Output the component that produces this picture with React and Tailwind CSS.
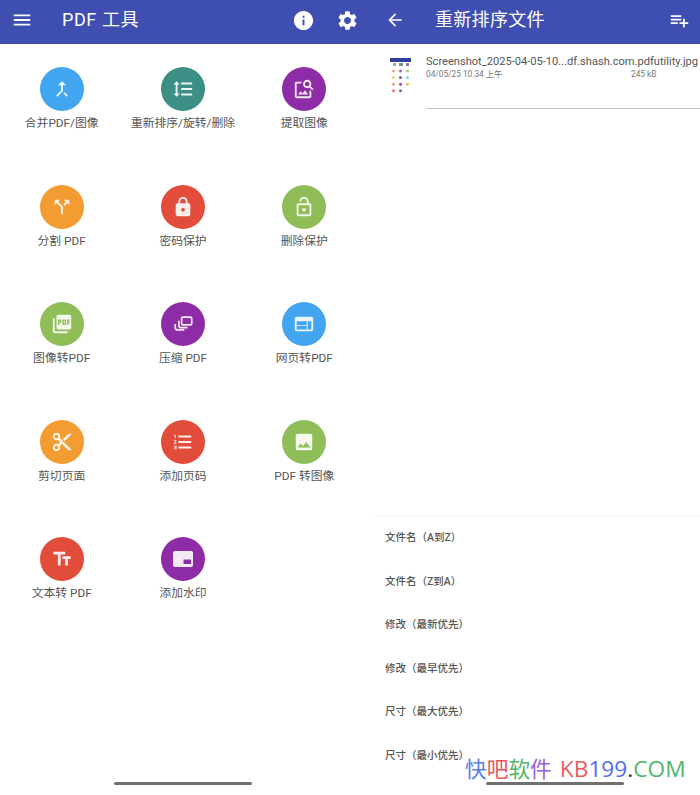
const P = {
  menu: "M3 18h18v-2H3v2zm0-5h18v-2H3v2zm0-7v2h18V6H3z",
  info: "M12 2C6.48 2 2 6.48 2 12s4.48 10 10 10 10-4.48 10-10S17.52 2 12 2zm1 15h-2v-6h2v6zm0-8h-2V7h2v2z",
  gear: "M19.14 12.94c.04-.3.06-.61.06-.94 0-.32-.02-.64-.07-.94l2.03-1.58c.18-.14.23-.41.12-.61l-1.92-3.32c-.12-.22-.37-.29-.59-.22l-2.39.96c-.5-.38-1.03-.7-1.62-.94l-.36-2.54c-.04-.24-.24-.41-.48-.41h-3.84c-.24 0-.43.17-.47.41l-.36 2.54c-.59.24-1.13.57-1.62.94l-2.39-.96c-.22-.08-.47 0-.59.22L2.74 8.87c-.12.21-.08.47.12.61l2.03 1.58c-.05.3-.09.63-.09.94s.02.64.07.94l-2.03 1.58c-.18.14-.23.41-.12.61l1.92 3.32c.12.22.37.29.59.22l2.39-.96c.5.38 1.03.7 1.62.94l.36 2.54c.05.24.24.41.48.41h3.84c.24 0 .44-.17.47-.41l.36-2.54c.59-.24 1.13-.56 1.62-.94l2.39.96c.22.08.47 0 .59-.22l1.92-3.32c.12-.22.07-.47-.12-.61l-2.01-1.58zM12 15.6c-1.98 0-3.6-1.62-3.6-3.6s1.62-3.6 3.6-3.6 3.6 1.62 3.6 3.6-1.62 3.6-3.6 3.6z",
  back: "M20 11H7.83l5.59-5.59L12 4l-8 8 8 8 1.41-1.41L7.83 13H20v-2z",
  add: "M14 10H2v2h12v-2zm0-4H2v2h12V6zm4 8v-4h-2v4h-4v2h4v4h2v-4h4v-2h-4zM2 16h8v-2H2v2z",
  merge: "M17 20.41L18.41 19 15 15.59 13.59 17 17 20.41zM7.5 8H11v5.59L5.59 19 7 20.41l6-6V8h3.5L12 3.5 7.5 8z",
  spacing: "M6 7h2.5L5 3.5 1.5 7H4v10H1.5L5 20.5 8.5 17H6V7zm4-2v2h12V5H10zm0 14h12v-2H10v2zm0-6h12v-2H10v2z",
  search: "M18 13v7H4V6h5.02c.05-.71.22-1.38.48-2H4c-1.1 0-2 .9-2 2v14c0 1.1.9 2 2 2h14c1.1 0 2-.9 2-2v-5l-2-2zm-1.5 5h-11l2.75-3.53 1.96 2.36 2.75-3.54zm2.8-9.11c.44-.7.7-1.51.7-2.39C20 4.01 17.99 2 15.5 2S11 4.01 11 6.5s2.01 4.5 4.49 4.5c.88 0 1.7-.26 2.39-.7L21 13.42 22.42 12 19.3 8.89zM15.5 9C14.12 9 13 7.88 13 6.5S14.12 4 15.5 4 18 5.12 18 6.5 16.88 9 15.5 9z",
  split: "M14 4l2.29 2.29-2.88 2.88 1.42 1.42 2.88-2.88L20 10V4zm-4 0H4v6l2.29-2.29 4.71 4.7V20h2v-8.41l-5.29-5.3z",
  lock: "M18 8h-1V6c0-2.76-2.24-5-5-5S7 3.24 7 6v2H6c-1.1 0-2 .9-2 2v10c0 1.1.9 2 2 2h12c1.1 0 2-.9 2-2V10c0-1.1-.9-2-2-2zm-6 9c-1.1 0-2-.9-2-2s.9-2 2-2 2 .9 2 2-.9 2-2 2zm3.1-9H8.9V6c0-1.71 1.39-3.1 3.1-3.1 1.71 0 3.1 1.39 3.1 3.1v2z",
  open: "M12 17c1.1 0 2-.9 2-2s-.9-2-2-2-2 .9-2 2 .9 2 2 2zm6-9h-1V6c0-2.76-2.24-5-5-5S7 3.24 7 6h1.9c0-1.71 1.39-3.1 3.1-3.1 1.71 0 3.1 1.39 3.1 3.1v2H6c-1.1 0-2 .9-2 2v10c0 1.1.9 2 2 2h12c1.1 0 2-.9 2-2V10c0-1.1-.9-2-2-2zm0 12H6V10h12v10z",
  pdf: "M20 2H8c-1.1 0-2 .9-2 2v12c0 1.1.9 2 2 2h12c1.1 0 2-.9 2-2V4c0-1.1-.9-2-2-2zm-8.5 7.5c0 .83-.67 1.5-1.5 1.5H9v2H7.5V7H10c.83 0 1.5.67 1.5 1.5v1zm5 2c0 .83-.67 1.5-1.5 1.5h-2.5V7H15c.83 0 1.5.67 1.5 1.5v3zm4-3H19v1h1.5V11H19v2h-1.5V7h3v1.5zM9 9.5h1v-1H9v1zM4 6H2v14c0 1.1.9 2 2 2h14v-2H4V6zm10 5.5h1v-3h-1v3z",
  web: "M20 4H4c-1.1 0-1.99.9-1.99 2L2 18c0 1.1.9 2 2 2h16c1.1 0 2-.9 2-2V6c0-1.1-.9-2-2-2zm-5 14H4v-4h11v4zm0-5H4V9h11v4zm5 5h-4V9h4v9z",
  cut: "M9.64 7.64c.23-.5.36-1.05.36-1.64 0-2.21-1.79-4-4-4S2 3.79 2 6s1.79 4 4 4c.59 0 1.14-.13 1.64-.36L10 12l-2.36 2.36C7.14 14.13 6.59 14 6 14c-2.21 0-4 1.79-4 4s1.79 4 4 4 4-1.79 4-4c0-.59-.13-1.14-.36-1.64L12 14l7 7h3v-1L9.64 7.64zM6 8c-1.1 0-2-.89-2-2s.9-2 2-2 2 .89 2 2-.9 2-2 2zm0 12c-1.1 0-2-.89-2-2s.9-2 2-2 2 .89 2 2-.9 2-2 2zm6-7.5c-.28 0-.5-.22-.5-.5s.22-.5.5-.5.5.22.5.5-.22.5-.5.5zM19 3l-6 6 2 2 7-7V3z",
  numbered: "M2 17h2v.5H3v1h1v.5H2v1h3v-4H2v1zm1-9h1V4H2v1h1v3zm-1 3h1.8L2 13.1v.9h3v-1H3.2L5 10.9V10H2v1zm5-6v2h14V5H7zm0 14h14v-2H7v2zm0-6h14v-2H7v2z",
  image: "M21 19V5c0-1.1-.9-2-2-2H5c-1.1 0-2 .9-2 2v14c0 1.1.9 2 2 2h14c1.1 0 2-.9 2-2zM8.5 13.5l2.5 3.01L14.5 12l4.5 6H5l3.5-4.5z",
  text: "M2.5 4v3h5v12h3V7h5V4h-13zm19 5h-9v3h3v7h3v-7h3V9z",
  pip: "M20 4H4c-1.1 0-2 .9-2 2v12c0 1.1.9 2 2 2h16c1.1 0 2-.9 2-2V6c0-1.1-.9-2-2-2zm0 13h-7.5v-4.5H20V17z",
};

const Ico = ({ d, size = 24, className = "" }) => (
  <svg viewBox="0 0 24 24" width={size} height={size} fill="currentColor" fillRule="evenodd" className={className}>
    <path d={d} />
  </svg>
);

const CompressIco = () => (
  <svg viewBox="0 0 24 24" width="22" height="22" fill="none" stroke="currentColor" strokeWidth="1.9">
    <rect x="10.5" y="4.5" width="11" height="8.5" rx="1.5" />
    <path d="M7.5 8.500v5a2.500 2.500 0 0 0 2.500 2.500h7" />
    <path d="M3.500 12v3.500a3 3 0 0 0 3 3h7" />
  </svg>
);

const tools = [
  ["合并PDF/图像", "bg-[#42a5f0]", P.merge, 22],
  ["重新排序/旋转/删除", "bg-[#3c8f85]", P.spacing, 22],
  ["提取图像", "bg-[#8e2ba6]", P.search, 22],
  ["分割 PDF", "bg-[#f39c32]", P.split, 22],
  ["密码保护", "bg-[#e24c3b]", P.lock, 22],
  ["删除保护", "bg-[#8fbe59]", P.open, 22],
  ["图像转PDF", "bg-[#8fbe59]", P.pdf, 22],
  ["压缩 PDF", "bg-[#8e2ba6]", null, 22],
  ["网页转PDF", "bg-[#42a5f0]", P.web, 22],
  ["剪切页面", "bg-[#f39c32]", P.cut, 22],
  ["添加页码", "bg-[#e24c3b]", P.numbered, 22],
  ["PDF 转图像", "bg-[#8fbe59]", P.image, 22],
  ["文本转 PDF", "bg-[#e24c3b]", P.text, 22],
  ["添加水印", "bg-[#8e2ba6]", P.pip, 24],
];

const sorts = ["文件名（A到Z）", "文件名（Z到A）", "修改（最新优先）", "修改（最早优先）", "尺寸（最大优先）", "尺寸（最小优先）"];

const Thumb = () => {
  const c = ["#e8a88a", "#8e6ab0", "#a8cc80", "#f4cc78", "#7a5aa8", "#90d0dc", "#ec9a82", "#9a48b0", "#d0c868", "#e87a66", "#8a5aa8"];
  const rows = [[0, 1, 2], [3, 4, 5], [6, 7, 8], [9, 10]];
  return (
    <svg width="22" height="36" viewBox="0 0 22 36" className="block">
      <rect x="0" y="0" width="21" height="4" fill="#2e3f9e" />
      <rect x="3" y="5" width="3" height="3" fill="#8ab0b0" />
      <rect x="9" y="5" width="4" height="3" fill="#6a9a90" />
      <rect x="16" y="5" width="3" height="3" fill="#9a70ac" />
      {rows.map((r, i) =>
        r.map((k, j) => <circle key={k} cx={3.5 + j * 7} cy={13 + i * 6.6} r="1.500" fill={c[k]} />)
      )}
    </svg>
  );
};

const Bar = () => <div className="h-[3px] w-[138px] rounded-full bg-[#6f6f6f]" />;

export default function App() {
  return (
    <div className="relative flex h-[795px] w-[700px] overflow-hidden bg-white font-['Roboto','Noto_Sans_CJK_SC',sans-serif]">
      {/* Left screen */}
      <div className="flex h-full w-[370px] flex-col">
        <header className="flex h-[44px] shrink-0 items-center bg-[#3f4eb1] pb-[4px] pl-[11px] text-white">
          <Ico d={P.menu} size={22} />
          <h1 className="ml-[29px] text-[18px] leading-none tracking-[0.6px]">PDF 工具</h1>
          <div className="ml-auto flex items-center gap-[21px] pr-[11px]">
            <Ico d={P.info} size={23} />
            <Ico d={P.gear} size={23} />
          </div>
        </header>
        <div className="grid w-[365px] grid-cols-3 auto-rows-[117.5px] pl-px pt-[23px]">
          {tools.map(([label, bg, d, s]) => (
            <div key={label} className="flex flex-col items-center">
              <div className={`flex h-[44px] w-[44px] items-center justify-center rounded-full text-white/90 ${bg}`}>
                {d ? <Ico d={d} size={s} /> : <CompressIco />}
              </div>
              <span className="mt-[4px] whitespace-nowrap text-[11.8px] leading-[16px] text-[#555555]">{label}</span>
            </div>
          ))}
        </div>
        <div className="mt-auto flex justify-center pb-[10px] pr-[4px]">
          <Bar />
        </div>
      </div>

      {/* Right screen */}
      <div className="relative flex h-full min-w-0 flex-1 flex-col">
        <header className="flex h-[44px] shrink-0 items-center bg-[#3f4eb1] pb-[4px] text-white">
          <Ico d={P.back} size={20} className="ml-[15px]" />
          <h2 className="ml-[30px] text-[18px] leading-none tracking-[0.3px]">重新排序文件</h2>
          <Ico d={P.add} size={21} className="ml-auto mr-[10px]" />
        </header>
        <div className="flex pl-[20px] pt-[10px]">
          <div className="w-[22px] pt-[4px]">
            <Thumb />
          </div>
          <div className="ml-[14px] min-w-0 flex-1">
            <div className="whitespace-nowrap text-[11.1px] leading-[15px] text-[#555555]">Screenshot_2025-04-05-10...df.shash.com.pdfutility.jpg</div>
            <div className="flex text-[8.3px] leading-[11px] text-[#777777]">
              <span className="w-[205px]">04/05/25 10.34 上午</span>
              <span>245 kB</span>
            </div>
            <div className="mt-[28px] h-px bg-[#c4c4c4]" />
          </div>
        </div>
        <div className="mt-auto border-t border-[#f8f8f8] pb-[6.4px] pl-[15px] pt-[11px]">
          {sorts.map((s) => (
            <div key={s} className="flex h-[43.6px] items-start text-[10.5px] font-medium leading-[22px] text-[#555555]">{s}</div>
          ))}
        </div>
        <div className="absolute bottom-[10px] left-[116px]">
          <Bar />
        </div>
      </div>

      {/* Watermark overlay */}
      <div className="absolute left-[465px] top-[752px] whitespace-nowrap text-[22.7px] leading-[32px] font-['Open_Sans','Noto_Sans_CJK_SC',sans-serif]">
        <span className="text-[21.7px] text-[#5b7cf0] font-['Noto_Sans_CJK_SC',sans-serif]">快</span>
        <span className="text-[21.7px] text-[#e8545a] font-['Noto_Sans_CJK_SC',sans-serif]">吧</span>
        <span className="text-[21.7px] text-[#53b56a] font-['Noto_Sans_CJK_SC',sans-serif]">软</span>
        <span className="text-[21.7px] text-[#9a62d8] font-['Noto_Sans_CJK_SC',sans-serif]">件</span>
        <span className="ml-[8px] text-[#ee5a5f]">KB</span>
        <span className="text-[#4f6cf0]">199</span>
        <span className="text-[#333333]">.</span>
        <span className="text-[#4fb56a]">COM</span>
      </div>
    </div>
  );
}
